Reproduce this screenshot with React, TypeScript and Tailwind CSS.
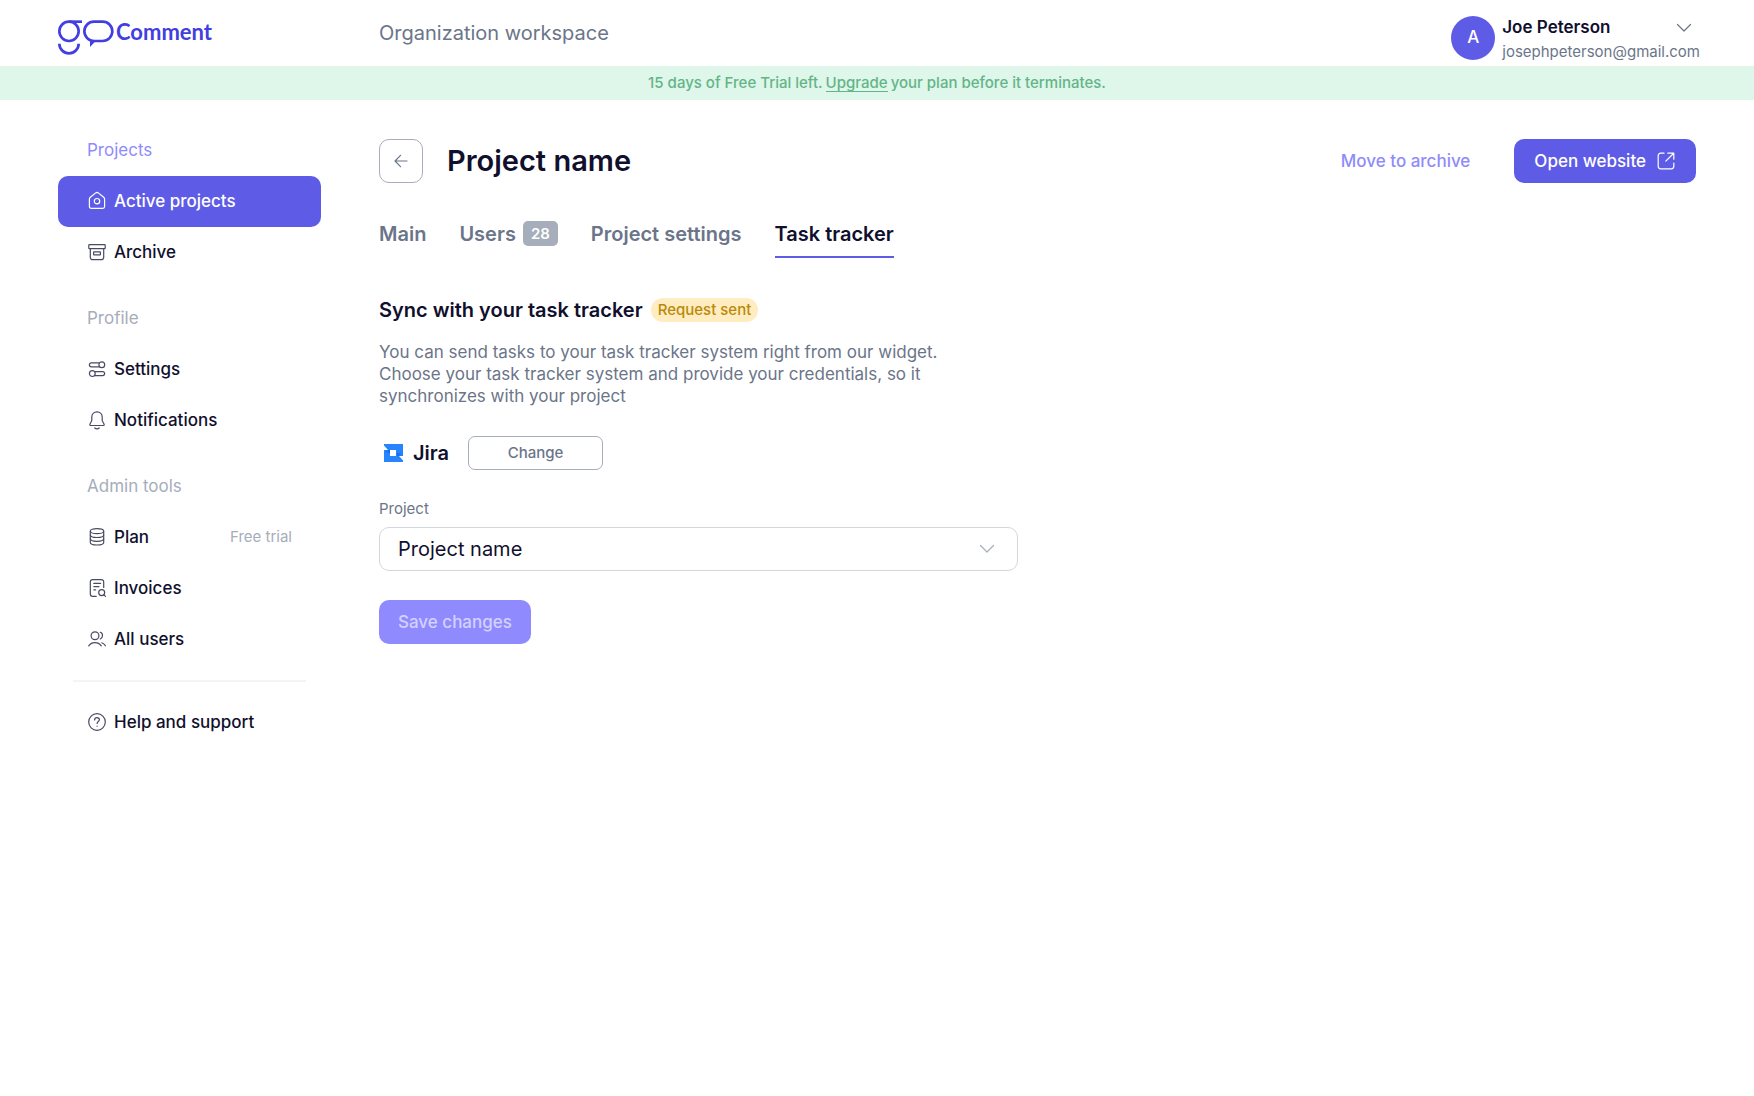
import type { ReactNode } from "react";

function Icon({ children, className = "size-5" }: { children: ReactNode; className?: string }) {
  return (
    <svg
      viewBox="0 0 20 20"
      fill="none"
      stroke="currentColor"
      strokeWidth={1.2}
      strokeLinecap="round"
      strokeLinejoin="round"
      className={`shrink-0 ${className}`}
      aria-hidden="true"
    >
      {children}
    </svg>
  );
}

const icons = {
  home: (
    <>
      <path d="M2.4 8.2c0-.8.3-1.4.9-1.9l5.4-4.4c.8-.6 1.8-.6 2.6 0l5.4 4.4c.6.5.9 1.1.9 1.9v7.3c0 1-.8 1.8-1.8 1.8H4.2c-1 0-1.8-.8-1.8-1.8z" />
      <circle cx="10" cy="10.2" r="2.7" />
    </>
  ),
  archive: (
    <>
      <rect x="1.8" y="2.6" width="16.4" height="4" rx=".6" />
      <path d="M3.3 6.6v8.6c0 1.5 1 2.5 2.5 2.5h8.4c1.5 0 2.5-1 2.5-2.5V6.6" />
      <rect x="6.6" y="9.8" width="6.8" height="3" rx=".4" />
    </>
  ),
  settings: (
    <>
      <path d="M12.2 3.8H4.4a2 2 0 0 0 0 4h7.8" />
      <circle cx="14.8" cy="5.8" r="2.9" />
      <path d="M7.8 12.6h7.8a2 2 0 0 1 0 4H7.8" />
      <circle cx="5.3" cy="14.6" r="2.9" />
    </>
  ),
  bell: (
    <>
      <path d="M10 1.8c-3.2 0-5.2 2.3-5.2 5.2v3.3c0 1.2-2 3.3-2 4.5 0 .5.3.7.8.7h12.8c.5 0 .8-.2.8-.7 0-1.2-2-3.3-2-4.5V7c0-2.9-2-5.2-5.2-5.2z" />
      <path d="M7.8 18c.6.6 1.4.9 2.2.9s1.6-.3 2.2-.9" />
    </>
  ),
  plan: (
    <>
      <ellipse cx="10" cy="4.2" rx="6.7" ry="2.5" />
      <path d="M3.3 4.2v11.3c0 1.4 3 2.5 6.7 2.5s6.7-1.1 6.7-2.5V4.2" />
      <path d="M3.3 8c0 1.4 3 2.5 6.7 2.5s6.7-1.1 6.7-2.5M3.3 11.8c0 1.4 3 2.5 6.7 2.5s6.7-1.1 6.7-2.5" />
    </>
  ),
  invoice: (
    <>
      <path d="M16.7 9.5V3.9c0-1.4-1-2.3-2.3-2.3H5.6c-1.4 0-2.3 1-2.3 2.3v12.2c0 1.4 1 2.3 2.3 2.3h3.6" />
      <path d="M6.8 5.4h6.8M6.8 8.6h5.2M6.8 11.8h1.8" />
      <circle cx="14.7" cy="14.6" r="3" />
      <path d="m16.9 16.8 1.6 1.6" />
    </>
  ),
  users: (
    <>
      <circle cx="8" cy="6.7" r="3.9" />
      <path d="M13.3 3.3c1.3.4 2.2 1.7 2.2 3.3s-.9 2.9-2.2 3.4" />
      <path d="M1.7 16.8c1.5-2.1 3.7-3.2 6.3-3.2s4.8 1.1 6.3 3.2M14.8 13.8c1.5.5 2.7 1.5 3.6 3" />
    </>
  ),
  help: (
    <>
      <circle cx="10" cy="10" r="8.3" />
      <path d="M7.6 8c0-1.4 1-2.3 2.4-2.3s2.4.9 2.4 2.1c0 1.7-2.3 1.8-2.3 3.7" />
      <path d="M10.1 14v.2" />
    </>
  ),
};

type NavItem = { label: string; icon: keyof typeof icons; active?: boolean; note?: string };

const sections: { title: string; titleClass: string; items: NavItem[] }[] = [
  {
    title: "Projects",
    titleClass: "text-[#8f8bfb]",
    items: [
      { label: "Active projects", icon: "home", active: true },
      { label: "Archive", icon: "archive" },
    ],
  },
  {
    title: "Profile",
    titleClass: "text-[#a6adbb]",
    items: [
      { label: "Settings", icon: "settings" },
      { label: "Notifications", icon: "bell" },
    ],
  },
  {
    title: "Admin tools",
    titleClass: "text-[#a6adbb]",
    items: [
      { label: "Plan", icon: "plan", note: "Free trial" },
      { label: "Invoices", icon: "invoice" },
      { label: "All users", icon: "users" },
    ],
  },
];

const tabs = [
  { label: "Main" },
  { label: "Users", count: 28 },
  { label: "Project settings" },
  { label: "Task tracker", active: true },
];

function NavLink({ item }: { item: NavItem }) {
  return (
    <a
      href="#"
      className={`flex h-[51px] items-center gap-[7px] rounded-[10px] px-[29px] text-[17px] font-medium ${
        item.active ? "bg-[#5e5ce6] text-white" : "text-[#110f2e]"
      }`}
    >
      <Icon className={item.active ? "mb-[2px] size-5 text-white" : "mb-[2px] size-5 text-[#4a4b63]"}>
        {icons[item.icon]}
      </Icon>
      {item.label}
      {item.note && <span className="ml-auto text-[15px] font-normal text-[#a6adbb]">{item.note}</span>}
    </a>
  );
}

function Logo() {
  return (
    <a href="#" aria-label="goComment" className="flex w-[263px] items-start gap-[2px] text-[#423ee0]">
      <svg viewBox="55 60 168 105" fill="none" stroke="currentColor" strokeWidth={8} className="h-[35px] w-14">
        <circle cx="88" cy="94" r="29" />
        <path d="M88 65h39" />
        <path d="M59 131a29 29 0 0 0 58 0" />
        <rect x="134" y="65" width="84" height="58" rx="29" />
        <path d="M151 123v18l15-16z" fill="currentColor" stroke="none" />
      </svg>
      <span className="font-['Lato',sans-serif] text-[22px] leading-6 font-bold">Comment</span>
    </a>
  );
}

function Header() {
  return (
    <header className="flex h-[66px] items-center gap-[58px] pr-[54px] pl-[58px]">
      <div className="pt-2">
        <Logo />
      </div>
      <p className="text-[20px] text-[#6b7589]">Organization workspace</p>
      <div className="ml-auto flex items-center gap-[7px] pt-[10px]">
        <span className="flex size-11 items-center justify-center rounded-full bg-[#5e5ce6] text-[17px] font-medium text-white">
          A
        </span>
        <div className="pt-[3px]">
          <button type="button" className="flex h-6 w-full items-center justify-between text-[17px] font-semibold text-[#110f2e]">
            Joe Peterson
            <Icon className="mr-[6px] size-5 text-[#6b7589]">
              <path d="m3.5 6.5 6.5 6.5 6.5-6.5" />
            </Icon>
          </button>
          <p className="h-6 text-[15px] leading-6 text-[#6b7589]">josephpeterson@gmail.com</p>
        </div>
      </div>
    </header>
  );
}

function Sidebar() {
  return (
    <nav className="pt-[25px]">
      <div className="flex flex-col gap-[15px]">
        {sections.map((section) => (
          <div key={section.title}>
            <h2 className={`flex h-[51px] items-center px-[29px] text-[17px] ${section.titleClass}`}>{section.title}</h2>
            {section.items.map((item) => (
              <NavLink key={item.label} item={item} />
            ))}
          </div>
        ))}
      </div>
      <hr className="mx-[15px] my-[15px] border-t-2 border-[#f3f4f6]" />
      <NavLink item={{ label: "Help and support", icon: "help" }} />
    </nav>
  );
}

export default function App() {
  return (
    <div className="min-h-screen bg-white font-['Inter',sans-serif] text-[#110f2e]">
      <Header />
      <p className="flex h-[34px] items-center justify-center gap-[3px] bg-[#dff6ea] text-[15px] font-medium text-[#62b587]">
        15 days of Free Trial left.
        <a href="#" className="border-b border-[#62b587] leading-4">
          Upgrade
        </a>
        your plan before it terminates.
      </p>

      <div className="grid grid-cols-[263px_1fr] gap-[58px] px-[58px]">
        <Sidebar />

        <main className="pt-[39px]">
          <div className="flex items-center">
            <button
              type="button"
              aria-label="Back"
              className="flex size-11 items-center justify-center rounded-[10px] border border-[#a6adbb] text-[#6b7589]"
            >
              <Icon>
                <path d="M16 10H4M9.5 4.3 4 10l5.500 5.700" />
              </Icon>
            </button>
            <h1 className="ml-6 text-[29px] font-semibold">Project name</h1>
            <button type="button" className="ml-auto text-[17px] leading-7 font-medium text-[#8f8bfb]">
              Move to archive
            </button>
            <a
              href="#"
              className="ml-11 flex h-11 items-center gap-[10px] rounded-[10px] bg-[#5e5ce6] px-5 text-[17px] leading-7 font-medium text-white"
            >
              Open website
              <Icon>
                <path d="M8 2.2H4.7c-1.5 0-2.5 1-2.5 2.5v10.6c0 1.5 1 2.5 2.5 2.5h10.6c1.5 0 2.5-1 2.5-2.5V12" />
                <path d="M11.8 2.2h6v6M17.5 2.5 9.8 10.2" />
              </Icon>
            </a>
          </div>

          <div role="tablist" className="mt-9 flex gap-[33px] text-[20px] font-semibold">
            {tabs.map((tab) => (
              <button
                key={tab.label}
                type="button"
                role="tab"
                aria-selected={!!tab.active}
                className={`flex h-[39px] items-start gap-[7px] border-b-2 leading-[30px] ${
                  tab.active ? "border-[#5e5ce6] text-[#110f2e]" : "border-transparent text-[#6b7589]"
                }`}
              >
                {tab.label}
                {tab.count && (
                  <span className="mt-[2px] flex h-[25px] items-center rounded-[5px] bg-[#a6adbb] px-2 text-[15px] text-white">
                    {tab.count}
                  </span>
                )}
              </button>
            ))}
          </div>

          <div className="mt-10 flex items-center gap-2">
            <h2 className="text-[20px] leading-6 font-semibold">Sync with your task tracker</h2>
            <span className="flex h-6 items-center rounded-full bg-[#ffecc0] px-[7px] text-[15px] font-medium text-[#b88a08]">
              Request sent
            </span>
          </div>
          <p className="mt-[19px] max-w-[580px] text-[17px] leading-[22px] text-[#6b7589]">
            You can send tasks to your task tracker system right from our widget. Choose your task tracker system and
            provide your credentials, so it synchronizes with your project
          </p>

          <div className="mt-[29px] flex items-center">
            <svg viewBox="0 0 29 29" className="size-[29px]" aria-hidden="true">
              <defs>
                <linearGradient id="jira-a" x1="1" y1="0" x2="0" y2="0">
                  <stop offset="0.2" stopColor="#2684ff" />
                  <stop offset="1" stopColor="#1068e8" />
                </linearGradient>
                <linearGradient id="jira-b" x1="0" y1="0" x2="1" y2="0">
                  <stop offset="0.2" stopColor="#2684ff" />
                  <stop offset="1" stopColor="#1068e8" />
                </linearGradient>
              </defs>
              <path d="M5 5h19v18H5z" fill="#2684ff" />
              <path d="M5 11h6v3H5z" fill="url(#jira-b)" />
              <path d="M18 14h6v3h-6z" fill="url(#jira-a)" />
              <path d="M5 6.5v4.500h4zM24 21.500V17h-4z" fill="#fff" />
              <path d="M11 11h6v6h-6z" fill="#fff" />
            </svg>
            <span className="ml-[5px] text-[20px] font-semibold">Jira</span>
            <button
              type="button"
              className="ml-[19px] h-[34px] w-[135px] rounded-[7px] border border-[#a6adbb] text-[15px] font-medium text-[#6b7589]"
            >
              Change
            </button>
          </div>

          <form className="mt-[29px] max-w-[639px]" onSubmit={(e) => e.preventDefault()}>
            <label htmlFor="project" className="block text-[15px] leading-5 text-[#6b7589]">
              Project
            </label>
            <div className="mt-2 grid">
              <select
                id="project"
                className="col-start-1 row-start-1 h-11 w-full appearance-none rounded-[10px] border border-[#d3d6dd] bg-white px-[18px] text-[20px] text-[#110f2e]"
              >
                <option>Project name</option>
              </select>
              <Icon className="pointer-events-none col-start-1 row-start-1 mr-[21px] size-5 self-center justify-self-end text-[#a6adbb]">
                <path d="m3.5 6.5 6.5 6.5 6.5-6.5" />
              </Icon>
            </div>
            <button
              type="submit"
              disabled
              className="mt-[29px] h-11 rounded-[10px] bg-[#8f8bff] px-[19px] text-[17px] leading-7 font-medium text-[#d3d1ff]"
            >
              Save changes
            </button>
          </form>
        </main>
      </div>
    </div>
  );
}
